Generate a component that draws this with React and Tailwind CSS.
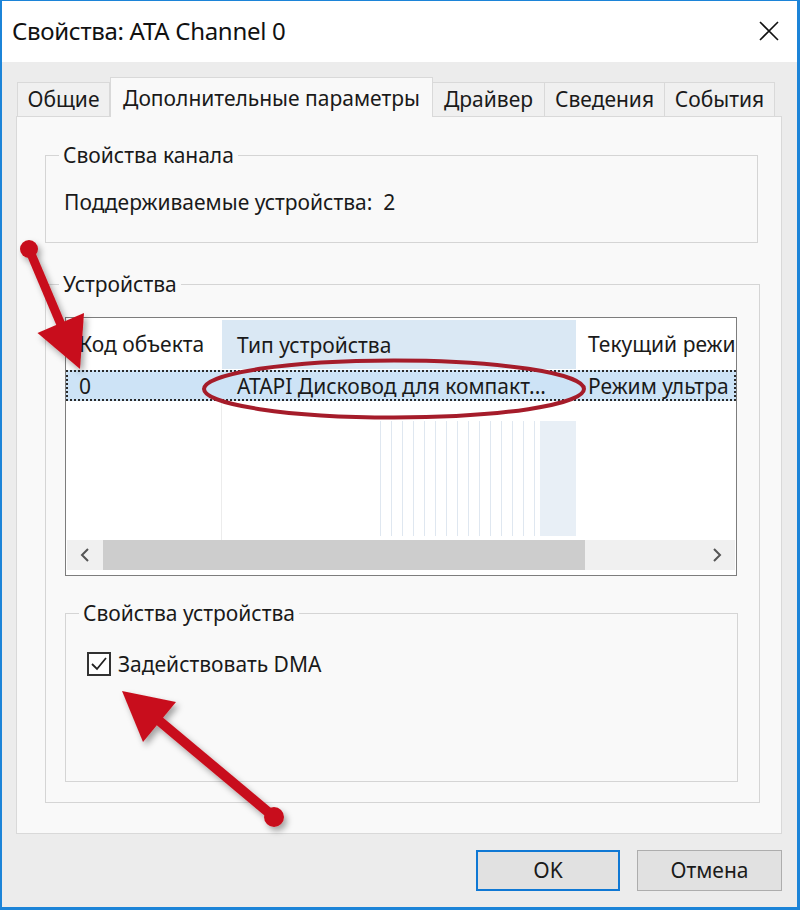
import React from "react";

function Legend({ children }) {
  return (
    <legend className="ml-[13px] px-[4px] text-[21px] leading-[24px] text-[#1a1a1a]">{children}</legend>
  );
}

function Tab({ w, selected, children }) {
  if (selected) {
    return (
      <div
        className={`${w} h-[40px] flex items-start justify-center pt-[5px] bg-[#f9f9f9] border border-b-0 border-[#d9d9d9] relative z-10 text-[21px] text-[#1a1a1a]`}
      >
        {children}
      </div>
    );
  }
  return (
    <div
      className={`${w} h-[35px] flex items-center justify-center bg-[#f0f0f0] border border-[#d9d9d9] -ml-px text-[21px] text-[#1a1a1a]`}
    >
      {children}
    </div>
  );
}

export default function App() {
  return (
    <div className="relative w-[800px] h-[910px] flex flex-col bg-[#ececec] border-l-2 border-r-[3px] border-b-[3px] border-t border-[#1c84d8] font-['Noto_Sans','Liberation_Sans',sans-serif] text-[#1a1a1a] overflow-hidden">
      {/* Title bar */}
      <div className="h-[61px] bg-white flex items-center justify-between pl-[10px] pr-[18px] shrink-0">
        <div className="text-[24px] text-[#111] tracking-[-0.3px] mt-[-2px]">Свойства: ATA Channel 0</div>
        <svg width="20" height="20" viewBox="0 0 20 20" className="mt-[-2px]">
          <path d="M1 1 L19 19 M19 1 L1 19" stroke="#111" strokeWidth="1.6" fill="none" />
        </svg>
      </div>

      {/* Body */}
      <div className="flex-1 flex flex-col pl-[14px] pr-[15px] pt-[15px]">
        {/* Tabs */}
        <div className="flex items-end h-[40px] pl-[2px] -mb-px relative z-10">
          <Tab w="w-[93px]">Общие</Tab>
          <Tab w="w-[323px]" selected>Дополнительные параметры</Tab>
          <Tab w="w-[113px]">Драйвер</Tab>
          <Tab w="w-[121px]">Сведения</Tab>
          <Tab w="w-[111px]">События</Tab>
        </div>

        {/* Panel */}
        <div className="border border-[#d9d9d9] bg-[#f9f9f9] pl-[28px] pr-[23px] pt-[26px] pb-[30px] flex flex-col">
          {/* Group 1 */}
          <fieldset className="border border-[#d5d5d5] pb-[28px]">
            <Legend>Свойства канала</Legend>
            <div className="pl-[18px] mt-[23px] text-[21px] leading-[24px]">
              Поддерживаемые устройства:&nbsp; 2
            </div>
          </fieldset>

          {/* Group 2 */}
          <fieldset className="mt-[29px] border border-[#d5d5d5] pb-[20px]">
            <Legend>Устройства</Legend>
            <div className="pl-[19px] pr-[22px]">
              {/* List view */}
              <div className="mt-[21px] border border-[#7d7d7d] bg-white flex flex-col text-[21px] leading-[24px]">
                {/* header */}
                <div className="grid grid-cols-[156px_354px_1fr] h-[51px]">
                  <div className="flex items-center pl-[13px] whitespace-nowrap">Код объекта</div>
                  <div className="flex items-center pl-[15px] bg-[#dae8f4] mt-[2px] whitespace-nowrap">Тип устройства</div>
                  <div className="flex items-center pl-[12px] whitespace-nowrap">Текущий режи</div>
                </div>
                {/* row */}
                <div className="grid grid-cols-[156px_354px_1fr] h-[31px] mt-[1px] bg-[#cde3f6] border-2 border-dotted border-[#2a2a2a]">
                  <div className="flex items-center pl-[11px] whitespace-nowrap">0</div>
                  <div className="flex items-center pl-[13px] whitespace-nowrap">ATAPI Дисковод для компакт...</div>
                  <div className="flex items-center pl-[10px] whitespace-nowrap">Режим ультра</div>
                </div>
                {/* body */}
                <div className="grid grid-cols-[156px_354px_1fr] h-[139px]">
                  <div className="border-r border-[#ececec]"></div>
                  <div className="flex">
                    <div className="w-[158px]"></div>
                    <div className="flex-1 mt-[20px] mb-[4px] bg-[repeating-linear-gradient(90deg,#dfe7f0_0px,#dfe7f0_1px,#ffffff_1px,#ffffff_11px)]"></div>
                    <div className="w-[36px] mt-[20px] mb-[4px] bg-[#e8eff6]"></div>
                  </div>
                  <div></div>
                </div>
                {/* scrollbar */}
                <div className="h-[30px] flex bg-[#f0f0f0] mx-[1px]">
                  <div className="w-[36px] flex items-center justify-center">
                    <svg width="12" height="14" viewBox="0 0 12 14">
                      <path d="M9 1 L3 7 L9 13" stroke="#555" strokeWidth="2" fill="none" />
                    </svg>
                  </div>
                  <div className="w-[482px] bg-[#cdcdcd]"></div>
                  <div className="flex-1"></div>
                  <div className="w-[36px] flex items-center justify-center">
                    <svg width="12" height="14" viewBox="0 0 12 14">
                      <path d="M3 1 L9 7 L3 13" stroke="#555" strokeWidth="2" fill="none" />
                    </svg>
                  </div>
                </div>
                <div className="h-[5px] bg-white"></div>
              </div>

              {/* Group 3 */}
              <fieldset className="mt-[25px] border border-[#d5d5d5] pb-[105px] mr-[-1px]">
                <Legend>Свойства устройства</Legend>
                <div className="pl-[21px] mt-[27px] flex items-center gap-[7px] h-[24px]">
                  <div className="w-[24px] h-[24px] border-2 border-[#333] bg-white flex items-center justify-center">
                    <svg width="18" height="16" viewBox="0 0 18 16">
                      <path d="M2 8 L7 13 L16 2" stroke="#222" strokeWidth="1.8" fill="none" />
                    </svg>
                  </div>
                  <span className="text-[21px] leading-[24px]">Задействовать DMA</span>
                </div>
              </fieldset>
            </div>
          </fieldset>
        </div>

        {/* Buttons */}
        <div className="flex justify-end gap-[17px] pt-[16px]">
          <button className="w-[144px] h-[41px] border-2 border-[#0f78d4] bg-[#e1e1e1] text-[21px] text-[#1a1a1a]">
            OK
          </button>
          <button className="w-[145px] h-[41px] border border-[#adadad] bg-[#e1e1e1] text-[21px] text-[#1a1a1a]">
            Отмена
          </button>
        </div>
      </div>

      {/* Annotations */}
      <svg className="absolute left-0 top-0 pointer-events-none" width="800" height="910" viewBox="0 0 800 910">
        <defs>
          <filter id="sh" x="-20%" y="-20%" width="140%" height="140%">
            <feDropShadow dx="3" dy="4" stdDeviation="3" floodColor="#000" floodOpacity="0.35" />
          </filter>
        </defs>
        <ellipse cx="392" cy="388" rx="190" ry="28.5" fill="none" stroke="#a51c2a" strokeWidth="4" />
        <g filter="url(#sh)" fill="#c8101c" stroke="#c8101c">
          <line x1="27" y1="248" x2="60" y2="326" strokeWidth="9" />
          <circle cx="27" cy="248" r="9" stroke="none" />
          <polygon points="78,368 35.5,332 82,312" stroke="none" />
          <line x1="272" y1="816" x2="155" y2="718" strokeWidth="10" />
          <circle cx="272" cy="816" r="10" stroke="none" />
          <polygon points="120,690 174,701 141,741" stroke="none" />
        </g>
      </svg>
    </div>
  );
}
